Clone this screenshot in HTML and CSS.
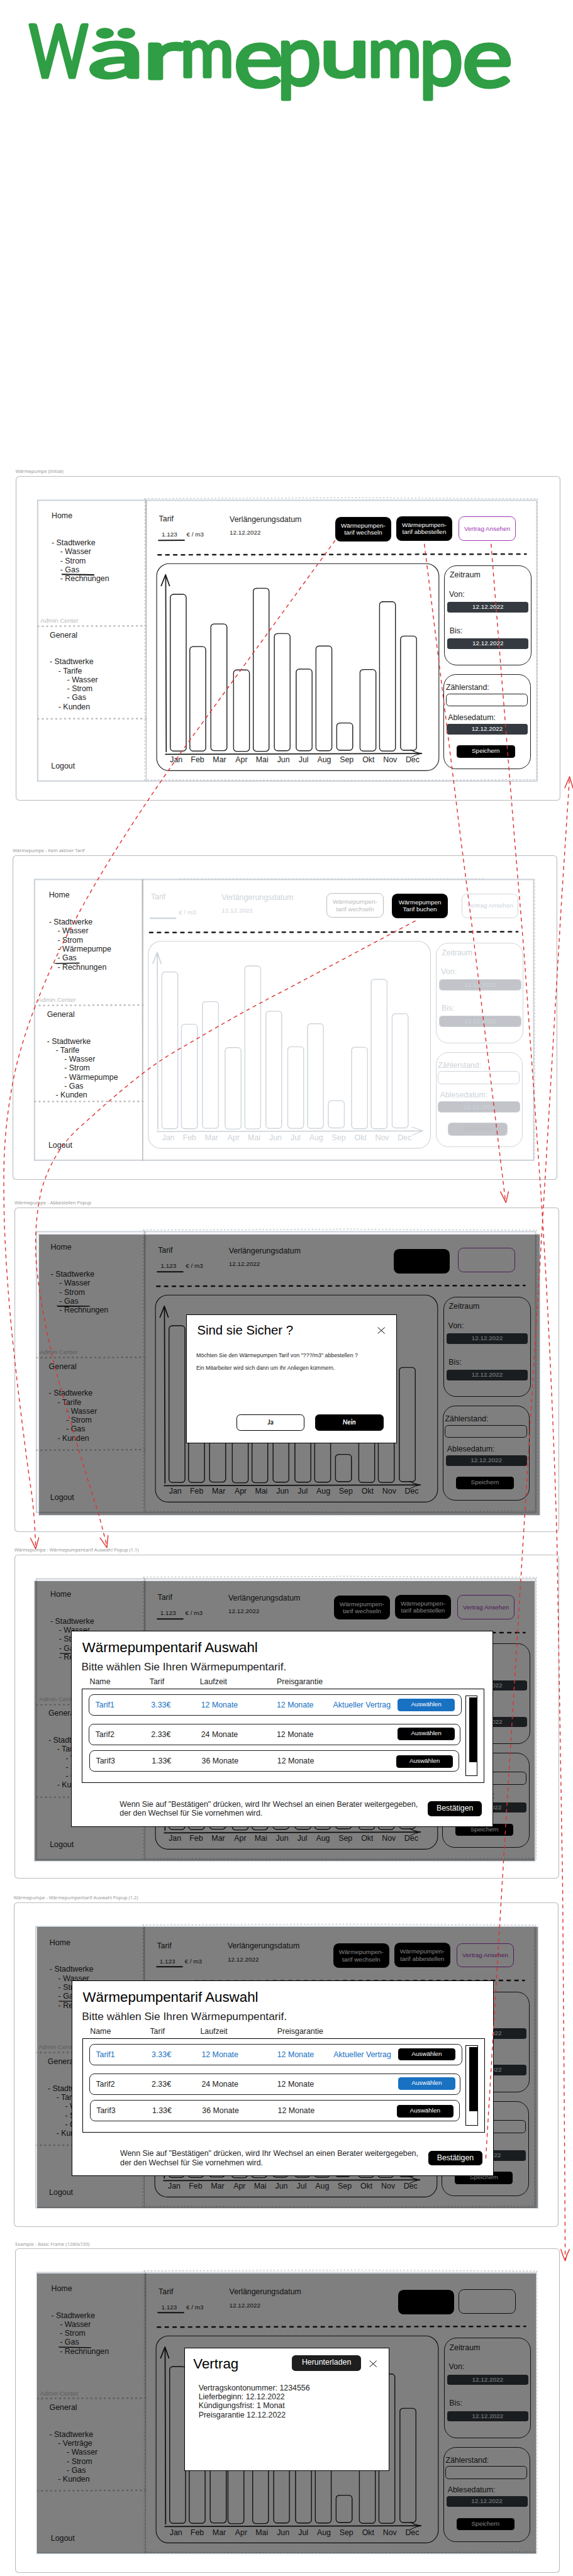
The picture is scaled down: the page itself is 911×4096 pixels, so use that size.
FILE: index.html
```html
<!DOCTYPE html>
<html lang="de">
<head>
<meta charset="utf-8">
<title>Wärmepumpe</title>
<link rel="stylesheet" href="styles.css">
</head>
<body>
<svg class="defs" width="0" height="0" aria-hidden="true">
  <defs>
    <g id="wire">
      <rect class="wire-edge" x="56.3" y="62" width="1280" height="720"/>
      <path class="wire-dots" d="M331 57.5L860 55.5L1338 58M331 57.5V779L900 781L1338 778M1338 58V779"/>
      <path class="wire-split" d="M332.3 60h4l-.9 724h-1.8z"/>
      <path class="wire-sep" d="M57 385L336 384.3"/>
    </g>
    <g id="bar-set">
      <rect x="396.2" y="303" width="40.8" height="402" rx="8"/>
      <rect x="446.3" y="437" width="40.8" height="268" rx="8"/>
      <rect x="500.2" y="379" width="41.2" height="325" rx="8"/>
      <rect x="609" y="287.6" width="40.4" height="418" rx="8"/>
      <rect x="663" y="403.6" width="40.4" height="300.6" rx="8"/>
      <rect x="719" y="494.8" width="40.8" height="209.5" rx="8"/>
      <rect x="769.7" y="435.7" width="40.8" height="268.5" rx="8"/>
      <rect x="823" y="633" width="41" height="70" rx="8"/>
      <rect x="882.7" y="496" width="40.8" height="209" rx="8"/>
      <rect x="932.8" y="322" width="40.8" height="383" rx="8"/>
      <rect x="986.7" y="410" width="41" height="293" rx="8"/>
    </g>
    <g id="chart-box">
      <rect x="361.5" y="224.5" width="723.7" height="531" rx="32"/>
      <use href="#bar-set"/>
      <use class="retrace" href="#bar-set" transform="translate(.6 .7)"/>
      <path class="axis" d="M384.6 253L386 707M373.2 281.3L384.3 253L394.3 281.3"/>
    </g>
    <g id="april"><rect x="558.4" y="497" width="40.8" height="209" rx="8"/><rect class="retrace" x="559" y="497.8" width="40.8" height="208.4" rx="8"/></g>
    <g id="x-axis">
      <path class="axis" d="M384 713.5L1041 711.5"/>
      <path d="M1013 702Q1024 709 1041 711.3Q1026 714 1013 721.6"/>
    </g>
    <path id="rule" class="rule" d="M365 202L1309 200"/>
  </defs>
</svg>

<main class="board">
  <header class="board-title">
    <svg viewBox="0 0 1469 340" role="img" aria-label="Wärmepumpe">
      <text class="hand"><tspan class="cap" x="74" y="198" textLength="152" lengthAdjust="spacingAndGlyphs">W</tspan><tspan x="226" y="198" textLength="143" lengthAdjust="spacingAndGlyphs">ä</tspan><tspan x="366" y="201" textLength="104" lengthAdjust="spacingAndGlyphs">r</tspan><tspan x="462" y="196" textLength="138" lengthAdjust="spacingAndGlyphs">m</tspan><tspan class="low-e" x="599" y="222" textLength="128" lengthAdjust="spacingAndGlyphs">e</tspan><tspan class="low-p" x="710" y="217" textLength="114" lengthAdjust="spacingAndGlyphs">p</tspan><tspan x="820" y="197" textLength="128" lengthAdjust="spacingAndGlyphs">u</tspan><tspan x="943" y="196" textLength="138" lengthAdjust="spacingAndGlyphs">m</tspan><tspan class="low-p" x="1074" y="217" textLength="114" lengthAdjust="spacingAndGlyphs">p</tspan><tspan class="low-e" x="1185" y="222" textLength="130" lengthAdjust="spacingAndGlyphs">e</tspan></text>
    </svg>
  </header>

  <section class="frame f1">
    <h2 class="frame-label">Wärmepumpe (Initial)</h2>
    <div class="frame-box">
      <svg class="sketch" viewBox="0 0 1397 832">
        <use href="#wire"/><path class="wire-sep" d="M57 622.5L336 622"/>
        <path class="mark" d="M119 252L200 253.5"/><path class="mark" d="M366.5 165L432 164.6"/>
        <use href="#rule"/><g class="ink"><use href="#chart-box"/><use href="#april"/><use href="#x-axis"/></g>
      </svg>
      <div class="screen">
        <nav class="side">
<pre class="menu">Home


- Stadtwerke
    - Wasser
    - Strom
    - Gas
    - Rechnungen</pre>
          <p class="zone">Admin Center</p>
<pre class="menu admin">General


- Stadtwerke
    - Tarife
        - Wasser
        - Strom
        - Gas
    - Kunden</pre>
          <p class="logout">Logout</p>
        </nav>
        <div class="content">
          <div class="top">
            <div class="tariff"><p>Tarif</p><p class="small"><span class="price">1.123</span>€ / m3</p></div>
            <div class="renewal"><p>Verlängerungsdatum</p><p class="small">12.12.2022</p></div>
            <div class="btn solid b-switch">Wärmepumpen-<br>tarif wechseln</div>
            <div class="btn solid b-cancel">Wärmepumpen-<br>tarif abbestellen</div>
            <div class="btn line b-view">Vertrag Ansehen</div>
          </div>
          <div class="lower">
            <div class="months"><span>Jan</span><span>Feb</span><span>Mar</span><span>Apr</span><span>Mai</span><span>Jun</span><span>Jul</span><span>Aug</span><span>Sep</span><span>Okt</span><span>Nov</span><span>Dec</span></div>
            <div class="panels">
              <div class="panel period"><p class="p-title">Zeitraum</p><p class="p-from">Von:</p><div class="date">12.12.2022</div><p class="p-to">Bis:</p><div class="date">12.12.2022</div></div>
              <div class="panel meter"><p class="p-meter">Zählerstand:</p><div class="field"></div><p class="p-read">Ablesedatum:</p><div class="date">12.12.2022</div><div class="save">Speichern</div></div>
            </div>
          </div>
        </div>
      </div>
    </div>
  </section>

  <section class="frame f2">
    <h2 class="frame-label">Wärmepumpe - Kein aktiver Tarif</h2>
    <div class="frame-box">
      <svg class="sketch" viewBox="0 0 1397 832">
        <rect class="wire-edge" x="56.3" y="62" width="1280" height="720"/>
        <path class="wire-dots faint" d="M334 64V780M1339 62V782M430 60H1210"/>
        <path class="wire-split" d="M331.3 61h4l-.6 723h-2.4z"/>
        <path class="wire-sep" d="M57 385L335 384M57 631.5L335 631"/>
        <path class="underline" d="M107 277L171 276M112 277.6L171 277"/>
        <g transform="translate(-13.5 -4)"><path class="mark off" d="M366.5 165.5H432"/><use href="#rule"/>
        <g class="ink off"><use href="#chart-box"/><use href="#april"/><path class="axis" d="M384 712.5L1064 711"/><path d="M1038 701L1066 710.5L1038 722"/></g></g>
      </svg>
      <div class="screen">
        <nav class="side">
<pre class="menu">Home


- Stadtwerke
    - Wasser
    - Strom
    - Wärmepumpe
    - Gas
    - Rechnungen</pre>
          <p class="zone">Admin Center</p>
<pre class="menu admin">General


- Stadtwerke
    - Tarife
        - Wasser
        - Strom
        - Wärmepumpe
        - Gas
    - Kunden</pre>
          <p class="logout">Logout</p>
        </nav>
        <div class="content inactive">
          <div class="top">
            <div class="tariff"><p>Tarif</p><p class="small"><span class="price"></span>€ / m3</p></div>
            <div class="renewal"><p>Verlängerungsdatum</p><p class="small">12.12.2022</p></div>
            <div class="btn line b-switch">Wärmepumpen-<br>tarif wechseln</div>
            <div class="btn solid b-cancel">Wärmepumpen<br>Tarif buchen</div>
            <div class="btn line b-view">Vertrag Ansehen</div>
          </div>
          <div class="lower">
            <div class="months"><span>Jan</span><span>Feb</span><span>Mar</span><span>Apr</span><span>Mai</span><span>Jun</span><span>Jul</span><span>Aug</span><span>Sep</span><span>Okt</span><span>Nov</span><span>Dec</span></div>
            <div class="panels">
              <div class="panel period"><p class="p-title">Zeitraum</p><p class="p-from">Von:</p><div class="date">12.12.2022</div><p class="p-to">Bis:</p><div class="date">12.12.2022</div></div>
              <div class="panel meter"><p class="p-meter">Zählerstand:</p><div class="field"></div><p class="p-read">Ablesedatum:</p><div class="date">12.12.2022</div><div class="save">Speichern</div></div>
            </div>
          </div>
        </div>
      </div>
    </div>
  </section>

  <section class="frame f3">
    <h2 class="frame-label">Wärmepumpe - Abbestellen Popup</h2>
    <div class="frame-box">
      <svg class="sketch" viewBox="0 0 1397 832">
        <use href="#wire"/><path class="wire-sep" d="M57 622.5L336 621"/>
        <path class="underline" d="M109 252L192.7 253M111 254L190 253.6"/><path class="mark" d="M366.5 165H432"/>
        <use href="#rule"/><g class="ink"><use href="#chart-box"/><use href="#april"/><use href="#x-axis"/></g>
      </svg>
      <div class="screen">
        <nav class="side">
<pre class="menu">Home


- Stadtwerke
    - Wasser
    - Strom
    - Gas
    - Rechnungen</pre>
          <p class="zone">Admin Center</p>
<pre class="menu admin">General


- Stadtwerke
    - Tarife
        - Wasser
        - Strom
        - Gas
    - Kunden</pre>
          <p class="logout">Logout</p>
        </nav>
        <div class="content">
          <div class="top">
            <div class="tariff"><p>Tarif</p><p class="small"><span class="price">1.123</span>€ / m3</p></div>
            <div class="renewal"><p>Verlängerungsdatum</p><p class="small">12.12.2022</p></div>
            <div class="btn solid b-cancel"></div>
            <div class="btn line b-view"></div>
          </div>
          <div class="lower">
            <div class="months"><span>Jan</span><span>Feb</span><span>Mar</span><span>Apr</span><span>Mai</span><span>Jun</span><span>Jul</span><span>Aug</span><span>Sep</span><span>Okt</span><span>Nov</span><span>Dec</span></div>
            <div class="panels">
              <div class="panel period"><p class="p-title">Zeitraum</p><p class="p-from">Von:</p><div class="date">12.12.2022</div><p class="p-to">Bis:</p><div class="date">12.12.2022</div></div>
              <div class="panel meter"><p class="p-meter">Zählerstand:</p><div class="field"></div><p class="p-read">Ablesedatum:</p><div class="date">12.12.2022</div><div class="save">Speichern</div></div>
            </div>
          </div>
        </div>
      </div>
      <div class="dim"></div>
      <div class="modal confirm">
        <div class="modal-head"><h3>Sind sie Sicher ?</h3><svg class="close" viewBox="0 0 20 18"><path d="M1 1L19 17M19 1L1 17"/></svg></div>
        <p class="ask">Möchten Sie den Wärmepumpen Tarif von "???/m3" abbestellen ?</p>
        <p class="note">Ein Mitarbeiter wird sich dann um Ihr Anliegen kümmern.</p>
        <div class="choices"><div class="yes">Ja</div><div class="no">Nein</div></div>
      </div>
    </div>
  </section>

  <section class="frame f4">
    <h2 class="frame-label">Wärmepumpe - Wärmepumpentarif Auswahl Popup (1.1)</h2>
    <div class="frame-box">
      <svg class="sketch" viewBox="0 0 1397 832">
        <use href="#wire"/><path class="wire-sep" d="M57 622H336"/>
        <path class="underline" d="M117 253.5H200"/><path class="mark" d="M366.5 165H432"/>
        <use href="#rule"/><g class="ink"><use href="#chart-box"/><use href="#april"/><use href="#x-axis"/></g>
      </svg>
      <div class="screen">
        <nav class="side">
<pre class="menu">Home


- Stadtwerke
    - Wasser
    - Strom
    - Gas
    - Rechnungen</pre>
          <p class="zone">Admin Center</p>
<pre class="menu admin">General


- Stadtwerke
    - Tarife
        - Wasser
        - Strom
        - Gas
    - Kunden</pre>
          <p class="logout">Logout</p>
        </nav>
        <div class="content">
          <div class="top">
            <div class="tariff"><p>Tarif</p><p class="small"><span class="price">1.123</span>€ / m3</p></div>
            <div class="renewal"><p>Verlängerungsdatum</p><p class="small">12.12.2022</p></div>
            <div class="btn solid b-switch">Wärmepumpen-<br>tarif wechseln</div>
            <div class="btn solid b-cancel">Wärmepumpen-<br>tarif abbestellen</div>
            <div class="btn line b-view">Vertrag Ansehen</div>
          </div>
          <div class="lower">
            <div class="months"><span>Jan</span><span>Feb</span><span>Mar</span><span>Apr</span><span>Mai</span><span>Jun</span><span>Jul</span><span>Aug</span><span>Sep</span><span>Okt</span><span>Nov</span><span>Dec</span></div>
            <div class="panels">
              <div class="panel period"><p class="p-title">Zeitraum</p><p class="p-from">Von:</p><div class="date">12.12.2022</div><p class="p-to">Bis:</p><div class="date">12.12.2022</div></div>
              <div class="panel meter"><p class="p-meter">Zählerstand:</p><div class="field"></div><p class="p-read">Ablesedatum:</p><div class="date">12.12.2022</div><div class="save">Speichern</div></div>
            </div>
          </div>
        </div>
      </div>
      <div class="dim"></div>
      <div class="modal choose">
        <h3>Wärmepumpentarif Auswahl</h3>
        <p class="lead">Bitte wählen Sie Ihren Wärmepumpentarif.</p>
        <div class="cols"><span>Name</span><span>Tarif</span><span>Laufzeit</span><span>Preisgarantie</span></div>
        <div class="list">
          <div class="rows">
            <div class="row r1 current"><span>Tarif1</span><span>3.33€</span><span>12 Monate</span><span>12 Monate</span><span>Aktueller Vertrag</span><b class="pick blue">Auswählen</b></div>
            <div class="row r2"><span>Tarif2</span><span>2.33€</span><span>24 Monate</span><span>12 Monate</span><span></span><b class="pick">Auswählen</b></div>
            <div class="row r3"><span>Tarif3</span><span>1.33€</span><span>36 Monate</span><span>12 Monate</span><span></span><b class="pick">Auswählen</b></div>
          </div>
          <div class="scroll"><div class="thumb"></div></div>
        </div>
        <div class="foot"><p>Wenn Sie auf "Bestätigen" drücken, wird Ihr Wechsel an einen Berater weitergegeben,<br>der den Wechsel für Sie vornehmen wird.</p><div class="ok">Bestätigen</div></div>
      </div>
    </div>
  </section>

  <section class="frame f5">
    <h2 class="frame-label">Wärmepumpe - Wärmepumpentarif Auswahl Popup (1.2)</h2>
    <div class="frame-box">
      <svg class="sketch" viewBox="0 0 1397 832">
        <use href="#wire"/><path class="wire-sep" d="M57 622.5H336"/>
        <path class="underline" d="M116 253.5H200"/><path class="mark" d="M366.5 165H432"/>
        <use href="#rule"/><g class="ink"><use href="#chart-box"/><use href="#april"/><use href="#x-axis"/></g>
      </svg>
      <div class="screen">
        <nav class="side">
<pre class="menu">Home


- Stadtwerke
    - Wasser
    - Strom
    - Gas
    - Rechnungen</pre>
          <p class="zone">Admin Center</p>
<pre class="menu admin">General


- Stadtwerke
    - Tarife
        - Wasser
        - Strom
        - Gas
    - Kunden</pre>
          <p class="logout">Logout</p>
        </nav>
        <div class="content">
          <div class="top">
            <div class="tariff"><p>Tarif</p><p class="small"><span class="price">1.123</span>€ / m3</p></div>
            <div class="renewal"><p>Verlängerungsdatum</p><p class="small">12.12.2022</p></div>
            <div class="btn solid b-switch">Wärmepumpen-<br>tarif wechseln</div>
            <div class="btn solid b-cancel">Wärmepumpen-<br>tarif abbestellen</div>
            <div class="btn line b-view">Vertrag Ansehen</div>
          </div>
          <div class="lower">
            <div class="months"><span>Jan</span><span>Feb</span><span>Mar</span><span>Apr</span><span>Mai</span><span>Jun</span><span>Jul</span><span>Aug</span><span>Sep</span><span>Okt</span><span>Nov</span><span>Dec</span></div>
            <div class="panels">
              <div class="panel period"><p class="p-title">Zeitraum</p><p class="p-from">Von:</p><div class="date">12.12.2022</div><p class="p-to">Bis:</p><div class="date">12.12.2022</div></div>
              <div class="panel meter"><p class="p-meter">Zählerstand:</p><div class="field"></div><p class="p-read">Ablesedatum:</p><div class="date">12.12.2022</div><div class="save">Speichern</div></div>
            </div>
          </div>
        </div>
      </div>
      <div class="dim"></div>
      <div class="modal choose">
        <h3>Wärmepumpentarif Auswahl</h3>
        <p class="lead">Bitte wählen Sie Ihren Wärmepumpentarif.</p>
        <div class="cols"><span>Name</span><span>Tarif</span><span>Laufzeit</span><span>Preisgarantie</span></div>
        <div class="list">
          <div class="rows">
            <div class="row r1 current"><span>Tarif1</span><span>3.33€</span><span>12 Monate</span><span>12 Monate</span><span>Aktueller Vertrag</span><b class="pick">Auswählen</b></div>
            <div class="row r2"><span>Tarif2</span><span>2.33€</span><span>24 Monate</span><span>12 Monate</span><span></span><b class="pick blue">Auswählen</b></div>
            <div class="row r3"><span>Tarif3</span><span>1.33€</span><span>36 Monate</span><span>12 Monate</span><span></span><b class="pick">Auswählen</b></div>
          </div>
          <div class="scroll"><div class="thumb"></div></div>
        </div>
        <div class="foot"><p>Wenn Sie auf "Bestätigen" drücken, wird Ihr Wechsel an einen Berater weitergegeben,<br>der den Wechsel für Sie vornehmen wird.</p><div class="ok">Bestätigen</div></div>
      </div>
    </div>
  </section>

  <section class="frame f6">
    <h2 class="frame-label">Example - Basic Frame (1280x720)</h2>
    <div class="frame-box">
      <svg class="sketch" viewBox="0 0 1397 832">
        <use href="#wire"/><path class="wire-sep" d="M57 622L336 620.5"/>
        <path class="underline" d="M112 253L194.6 254.5M114 254L194 255"/><path class="mark" d="M366.5 165H432"/>
        <use href="#rule"/><g class="ink"><use href="#chart-box"/><use href="#april" transform="translate(-12.7 0)"/><use href="#x-axis"/></g>
      </svg>
      <div class="screen">
        <nav class="side">
<pre class="menu">Home


- Stadtwerke
    - Wasser
    - Strom
    - Gas
    - Rechnungen</pre>
          <p class="zone">Admin Center</p>
<pre class="menu admin">General


- Stadtwerke
    - Verträge
        - Wasser
        - Strom
        - Gas
    - Kunden</pre>
          <p class="logout">Logout</p>
        </nav>
        <div class="content">
          <div class="top">
            <div class="tariff"><p>Tarif</p><p class="small"><span class="price">1.123</span>€ / m3</p></div>
            <div class="renewal"><p>Verlängerungsdatum</p><p class="small">12.12.2022</p></div>
            <div class="btn solid b-cancel"></div>
            <div class="btn line b-view"></div>
          </div>
          <div class="lower">
            <div class="months"><span>Jan</span><span>Feb</span><span>Mar</span><span>Apr</span><span>Mai</span><span>Jun</span><span>Jul</span><span>Aug</span><span>Sep</span><span>Okt</span><span>Nov</span><span>Dec</span></div>
            <div class="panels">
              <div class="panel period"><p class="p-title">Zeitraum</p><p class="p-from">Von:</p><div class="date">12.12.2022</div><p class="p-to">Bis:</p><div class="date">12.12.2022</div></div>
              <div class="panel meter"><p class="p-meter">Zählerstand:</p><div class="field"></div><p class="p-read">Ablesedatum:</p><div class="date">12.12.2022</div><div class="save">Speichern</div></div>
            </div>
          </div>
        </div>
      </div>
      <div class="dim"></div>
      <div class="modal contract">
        <div class="modal-head"><h3>Vertrag</h3><div class="download">Herunterladen</div><svg class="close" viewBox="0 0 20 18"><path d="M1 1L19 17M19 1L1 17"/></svg></div>
        <p class="facts">Vertragskontonummer: 1234556<br>Lieferbeginn: 12.12.2022<br>Kündigungsfrist: 1 Monat<br>Preisgarantie 12.12.2022</p>
      </div>
    </div>
  </section>

  <svg class="flows" viewBox="0 0 1469 6608" preserveAspectRatio="none" aria-hidden="true">
    <g class="dash">
      <path d="M858.7 1386.7L477 1912C350 2090 250 2250 190 2365C140 2455 60 2630 33 2776C15 2870 8 2960 10 3062C10 3200 25 3370 35 3462C45 3560 65 3720 78 3810C86 3860 90 3920 91.4 3970"/>
      <path d="M1064.5 2362.4L738 2536C640 2586 555 2635 457 2692.5C370 2742 290 2815 206 2890C155 2935 125 2990 107 3050C92 3110 85 3200 98.5 3290C110 3380 135 3490 155 3559C185 3660 225 3800 253 3884L274 3965"/>
      <path d="M1088 1396L1181 2150L1212 2391L1296 3082"/>
      <path d="M1259 1396L1319 2150L1343.5 2443L1386 3050C1400 3260 1418 3600 1428 3955L1442.4 4838L1448 5586L1449 5796"/>
      <path d="M1245.5 5536L1287 4838L1341.6 3946L1396 3048L1440 2305L1460 1996"/>
    </g>
    <g class="tip">
      <path d="M78.3 3945.7L91.4 3973L99.4 3944.6"/>
      <path d="M256.7 3945L274 3970L277 3939"/>
      <path d="M1283 3057L1297 3084.7L1303.5 3057"/>
      <path d="M1438 5770Q1442 5785 1449 5799.4Q1452 5785 1459.7 5770"/>
      <path d="M1448 2021L1460.2 1992.3L1469 2022"/>
    </g>
  </svg>
</main>
</body>
</html>
```

FILE: styles.css
```css
/* 1rem equals ten board units */
html { font-size: 6.2px; }
* { box-sizing: border-box; }
body {
  margin: 0;
  background: #fff;
  color: #1e1e1e;
  font-family: "Liberation Sans", Arial, sans-serif;
  font-size: 2rem;
  line-height: 1.15;
}
p, h2, h3, pre { margin: 0; font: inherit; }
.defs { position: absolute; }
.board {
  position: relative;
  width: 911px;
  height: 4096px;
  overflow: hidden;
}

/* board title */
.board-title { height: 119.68rem; }
.board-title svg { display: block; width: 100%; }
.hand {
  font: 400 176px Lato, sans-serif;
  fill: #2f9e44;
  stroke: #2f9e44;
  stroke-width: 8;
  stroke-linejoin: round;
}
.cap { font-size: 188px; }
.low-e { font-size: 212px; }
.low-p { font-size: 215px; }

/* frames */
.frame { width: 139.7rem; }
.frame-label {
  height: 2.4rem;
  line-height: 2.4rem;
  font-family: "Noto Sans", sans-serif;
  font-size: 1.2rem;
  color: #999;
  white-space: nowrap;
}
.frame-box {
  position: relative;
  height: 83.2rem;
  border-radius: .9rem;
  box-shadow: inset 0 0 0 .18rem #bbb;
}
.f1 { margin-left: 3.98rem; }
.f2 { margin: 11.68rem 0 0 3.28rem; }
.f3 { margin: 4.71rem 0 0 3.75rem; }
.f4 { margin: 3.38rem 0 0 3.65rem; }
.f5 { margin: 3.71rem 0 0 3.47rem; }
.f6 { margin: 3.14rem 0 0 3.9rem; }

/* line art */
.sketch { position: absolute; inset: 0; width: 100%; height: 100%; fill: none; }
.wire-edge { stroke: #ced4da; stroke-width: 3.5; }
.wire-dots { stroke: #bbb; stroke-width: 2; stroke-linecap: round; stroke-dasharray: 2 7; }
.wire-dots.faint { stroke-width: 1.6; }
.wire-split { fill: #bbb; }
.wire-sep { stroke: #bbb; stroke-width: 4; stroke-linecap: round; stroke-dasharray: 1.5 10; }
.rule { stroke: #1e1e1e; stroke-width: 4; stroke-linecap: round; stroke-dasharray: 8 12; }
.mark { stroke: #1e1e1e; stroke-width: 3.4; stroke-linecap: round; }
.underline { stroke: #1e1e1e; stroke-width: 1.8; stroke-linecap: round; }
.ink { stroke: #1e1e1e; stroke-width: 1.8; stroke-linecap: round; stroke-linejoin: round; }
.retrace { stroke-width: 1; }
.axis { stroke-width: 2.8; }
.ink.off, .mark.off { stroke: #ced4da; }

/* screen */
.screen {
  position: relative;
  display: grid;
  grid-template-columns: 33.4rem 1fr;
  height: 83.2rem;
}
.side { padding-top: 9.1rem; }
.menu { height: 27.07rem; padding-left: 9.25rem; }
.menu.admin { height: 33.6rem; margin-top: 1.63rem; padding-left: 8.77rem; }
.zone { height: 1.84rem; padding-left: 6.4rem; font-size: 1.6rem; color: #bbb; }
.logout { padding-left: 9.13rem; }
.top { display: flex; height: 22.45rem; }
.small { font-size: 1.6rem; }
.tariff { width: 21.5rem; padding: 9.9rem 0 0 3.36rem; }
.tariff .small { margin-top: 1.9rem; display: flex; }
.price { width: 7.1rem; padding-left: .7rem; }
.renewal { width: 27.08rem; padding-top: 10rem; white-space: nowrap; }
.renewal .small { margin-top: 1.34rem; }
.btn {
  flex: none;
  display: flex;
  align-items: center;
  justify-content: center;
  text-align: center;
  height: 6.25rem;
  border-radius: 1.4rem;
  font-size: 1.6rem;
  white-space: nowrap;
}
.btn.solid { background: #000; color: #fff; }
.btn.line { border: .15rem solid #9c36b5; color: #9c36b5; }
.b-switch { width: 14.35rem; margin: 10.5rem 1.3rem 0 0; }
.b-cancel { width: 14.35rem; margin: 10.33rem 1.7rem 0 0; }
.b-view { width: 14.56rem; margin-top: 10.4rem; }
.lower { display: flex; }
.months {
  width: 76.5rem;
  padding: 49.2rem 0 0 6.2rem;
  display: grid;
  grid-template-columns: 5.35rem 5.65rem 5.8rem 5.24rem 5.46rem 5.5rem 4.79rem 5.77rem 5.81rem 5.33rem 5.75rem auto;
}
.panel { border: .19rem solid #1e1e1e; border-radius: 3.2rem; }
.period { width: 22.4rem; height: 25.75rem; margin-top: .4rem; padding-top: 1.25rem; }
.meter { width: 22.35rem; height: 24.36rem; margin: 2.3rem 0 0 -.12rem; padding-top: 2.05rem; }
.p-title { padding-left: 1.28rem; }
.p-from { margin-top: 2.6rem; padding-left: 1.12rem; }
.p-to { margin-top: 3.55rem; padding-left: 1.24rem; }
.p-meter { padding-left: .42rem; }
.p-read { margin-top: 1.7rem; padding-left: .95rem; }
.date {
  width: 20.8rem;
  height: 2.7rem;
  margin: .82rem 0 0 .7rem;
  border-radius: .6rem;
  background: #343a40;
  color: #fff;
  font-size: 1.6rem;
  line-height: 2.55rem;
  text-align: center;
}
.meter .date { margin: .46rem 0 0 .61rem; }
.field { width: 21rem; height: 3.35rem; margin: .34rem 0 0 .4rem; border: .19rem solid #1e1e1e; border-radius: .9rem; }
.save {
  width: 14.9rem;
  height: 3.2rem;
  margin: 2.8rem 0 0 3.2rem;
  border-radius: .7rem;
  background: #000;
  color: #fff;
  font-size: 1.6rem;
  line-height: 3rem;
  text-align: center;
}

/* frame without an active tariff */
.inactive { color: #ced4da; margin: -.4rem 0 0 -1.35rem; }
.inactive .btn.line { border-color: #ced4da; color: #ced4da; }
.inactive .b-switch.line { width: 14.55rem; margin: 10.1rem 2.17rem 0 -.13rem; border-color: #bbb; color: #bbb; }
.inactive .b-cancel { margin: 10.2rem 3.55rem 0 0; }
.inactive .b-view { margin-top: 10.2rem; }
.inactive .panel, .inactive .field { border-color: #ced4da; }
.inactive .date, .inactive .save { background: #c2c4c9; color: #ced4da; }
.inactive .date { outline: .15rem solid #ced4da; }
.inactive .save { outline: .3rem solid #ced4da; color: #b8babf; }

/* dimmed frames */
.dim { position: absolute; background: rgba(0, 0, 0, .5); box-shadow: 0 0 0 .25rem rgba(206, 212, 218, .55); }
.f3 .dim { left: 6.3rem; top: 6.95rem; width: 128.3rem; height: 71.9rem; }
.f4 .dim { left: 5.3rem; top: 6.8rem; width: 128.2rem; height: 71.8rem; }
.f5 .dim { left: 6.1rem; top: 6.3rem; width: 128.4rem; height: 72rem; }
.f6 .dim { left: 5.65rem; top: 6.4rem; width: 127.9rem; height: 71.7rem; }
.f3 .b-cancel { margin: 10.7rem 2.2rem 0 15.2rem; }
.f6 .b-cancel { margin: 10.6rem 1.2rem 0 16.2rem; }
.f6 .btn.line { border-color: #1e1e1e; }

/* dialogs */
.modal { position: absolute; background: #fff; border: .17rem solid #000; color: #1e1e1e; }
.modal h3 { color: #000; }
.modal-head { display: flex; }
.close { width: 2rem; height: 1.8rem; stroke: #000; stroke-width: 1.6; }
.confirm { left: 44rem; top: 27.44rem; width: 54rem; height: 33.06rem; }
.confirm h3 { width: 46rem; padding: 2.1rem 0 0 2.65rem; font-size: 3.28rem; }
.confirm .close { margin: 3.1rem 0 0 2.8rem; }
.ask, .note { padding-left: 2.4rem; font-size: 1.42rem; white-space: nowrap; }
.ask { margin-top: 3.65rem; }
.note { margin-top: 1.65rem; }
.choices { display: flex; margin: 11rem 0 0 12.7rem; gap: 2.7rem; font-family: Lato, sans-serif; font-weight: 700; font-size: 1.7rem; }
.yes, .no { width: 17.5rem; height: 4.25rem; border: .16rem solid #000; border-radius: 1rem; text-align: center; line-height: 3.8rem; }
.no { background: #000; color: #fff; font-style: italic; }

.choose { width: 108.2rem; height: 50.3rem; white-space: nowrap; }
.f4 .choose { left: 14.58rem; top: 19.56rem; }
.f5 .choose { left: 14.88rem; top: 19.9rem; }
.choose h3 { padding: 2.2rem 0 0 2.7rem; font-size: 3.6rem; }
.lead { margin-top: 1.28rem; padding-left: 2.5rem; font-size: 2.8rem; }
.cols { display: grid; grid-template-columns: 15.35rem 12.9rem 19.75rem auto; margin-top: .95rem; padding-left: 4.6rem; }
.list { display: flex; width: 103.3rem; height: 24.1rem; margin: .7rem 0 0 2.55rem; border: .12rem solid #000; }
.rows { width: 98.2rem; padding: 1.3rem 0 0 1.7rem; }
.row {
  display: grid;
  grid-template-columns: 14.3rem 12.8rem 19.4rem 14.45rem 16.6rem 14.6rem;
  align-items: center;
  width: 95.6rem;
  height: 5.45rem;
  padding-left: 1.5rem;
  border: .23rem solid #1e1e1e;
  border-radius: 1.3rem;
}
.r2 { width: 95.2rem; margin-top: 2.05rem; }
.r3 { width: 94.8rem; margin: 1.38rem 0 0 .14rem; grid-template-columns: 14.3rem 12.8rem 19.4rem 14.45rem 16.05rem 14.6rem; }
.current { color: #1971c2; }
.pick { height: 3.2rem; border-radius: .7rem; background: #000; color: #fff; font-size: 1.6rem; font-weight: 400; line-height: 3rem; text-align: center; }
.pick.blue { background: #1971c2; }
.r1 .pick, .r2 .pick { margin-top: -.25rem; }
.r3 .pick { margin-top: .2rem; }
.scroll { width: 3.2rem; height: 20.7rem; margin-top: 1.5rem; padding: .4rem 0 0 .8rem; border: .12rem solid #000; }
.thumb { width: 2.05rem; height: 16.5rem; background: #000; }
.foot { display: flex; padding: 4.3rem 0 0 12.3rem; }
.foot p { width: 79rem; }
.ok { width: 13.92rem; height: 3.82rem; margin-top: .4rem; border-radius: .9rem; background: #000; color: #fff; text-align: center; line-height: 3.7rem; }

.contract { left: 43.4rem; top: 25.48rem; width: 52.54rem; height: 31.6rem; }
.contract h3 { width: 27.4rem; padding: 1.8rem 0 0 2.1rem; font-size: 3.6rem; }
.download { width: 17.75rem; height: 4.05rem; margin-top: 1.75rem; border-radius: .9rem; background: #1e1e1e; color: #fff; text-align: center; line-height: 3.85rem; }
.contract .close { margin: 3.05rem 0 0 2rem; }
.facts { padding: 3rem 0 0 3.45rem; }

/* arrows between frames */
.flows { position: absolute; inset: 0; width: 911px; height: 4096px; fill: none; stroke: #e03131; stroke-width: 2.3; stroke-linecap: round; stroke-linejoin: round; }
.dash { stroke-dasharray: 8 10.5; }
```
